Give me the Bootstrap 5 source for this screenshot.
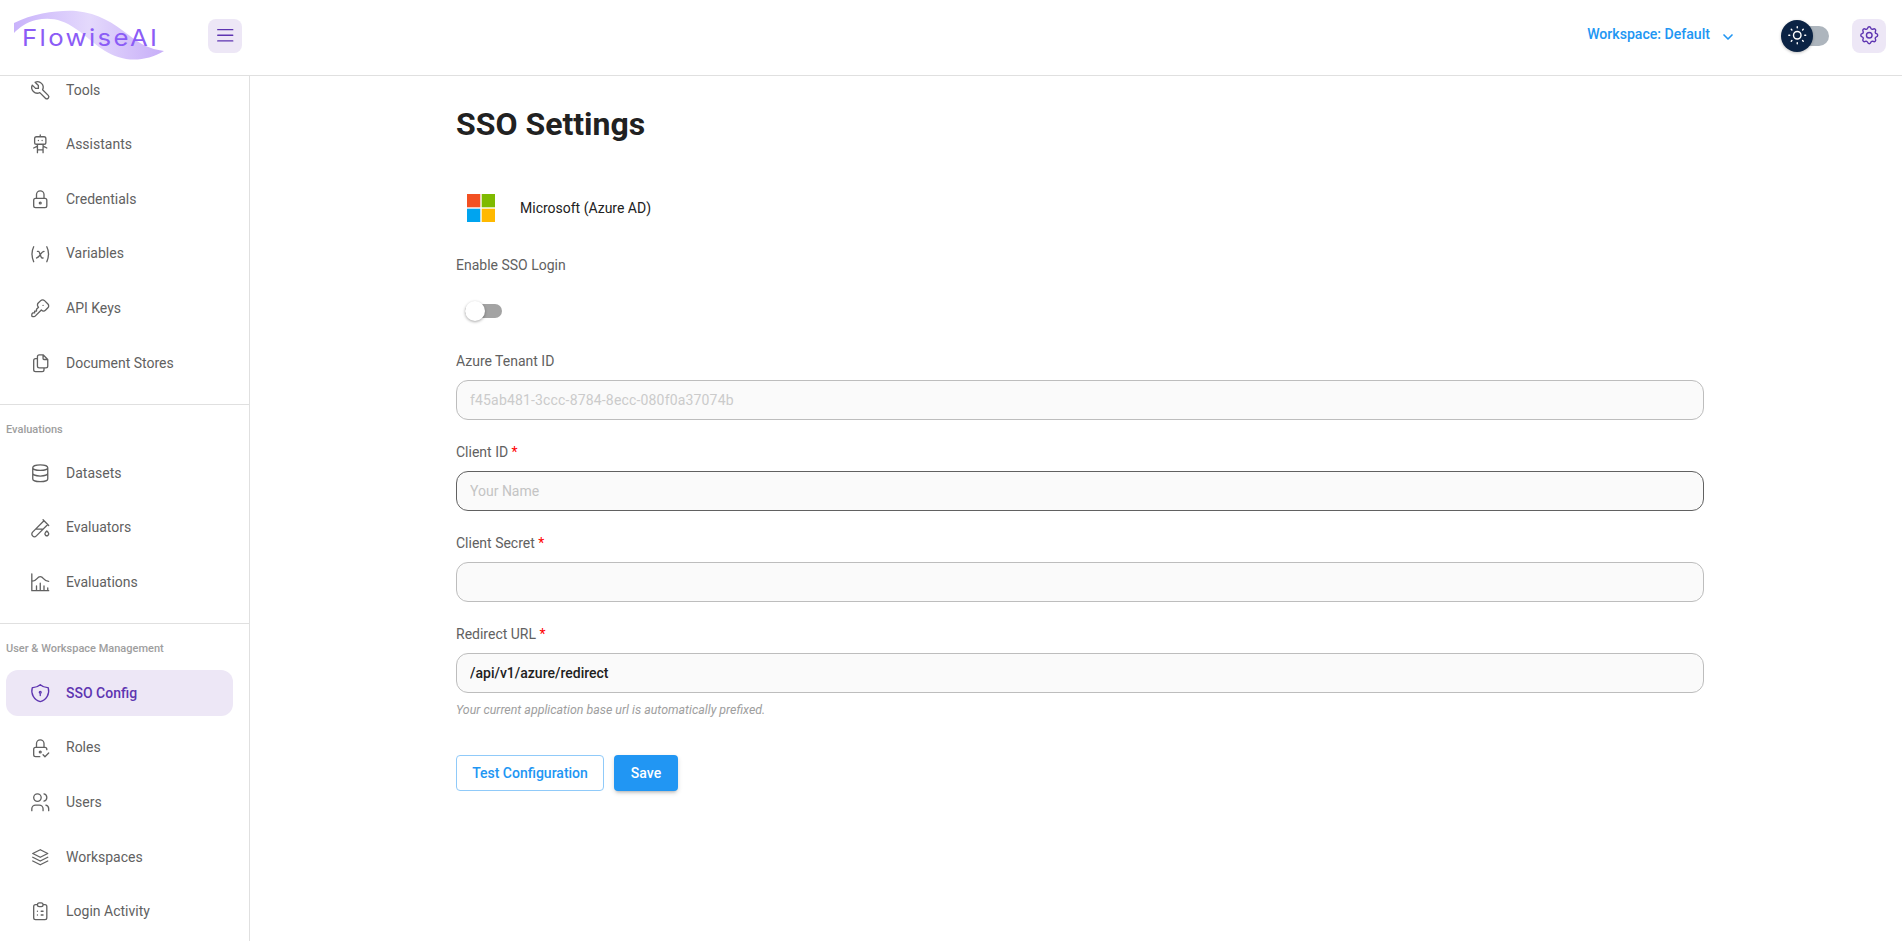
<!DOCTYPE html>
<html lang="en">
<head>
  <meta charset="UTF-8">
  <meta name="viewport" content="width=device-width, initial-scale=1.0">
  <title>SSO Settings | FlowiseAI</title>
  <link href="https://cdn.jsdelivr.net/npm/bootstrap@5.3.3/dist/css/bootstrap.min.css" rel="stylesheet">
  <style>
    html, body { height: 100%; overflow: hidden; }
    body { font-family: Roboto, sans-serif; font-size: 14px; color: #616161; background: #fff; }

    .top-bar { height: 76px; border-bottom: 1px solid #e0e0e0; padding: 0 16px 4px 14px; flex: none; }
    .logo-box { width: 194px; height: 75px; margin-top: 4px; }
    .soft-btn { width: 34px; height: 34px; border-radius: 8px; border: 0; padding: 0; background: #ede7f6; color: #5e35b1; }
    .soft-btn svg { width: 22.5px; height: 22.5px; }
    .ws-btn { color: #2196f3; font-weight: 500; font-size: 14.1px; margin-right: 47px; margin-top: -1.5px; }
    .ws-btn svg { width: 16px; height: 16px; margin-left: 10px; margin-top: 4px; }
    .theme-switch { position: relative; width: 46px; height: 20px; margin-right: 23px; border-radius: 10px; background: #adb5bd; }
    .theme-knob { position: absolute; left: -2px; top: -6px; width: 32px; height: 32px; border-radius: 50%; background: #0b2344; color: #fff; box-shadow: 0 1px 3px rgba(0,0,0,.25); }
    .theme-knob svg { width: 22.5px; height: 22.5px; }

    .side-panel { width: 250px; flex: none; border-right: 1px solid #e0e0e0; overflow: hidden; padding: 0 16px 0 6px; }
    .side-group { display: flex; flex-direction: column; gap: 8.67px; }
    .side-group.first { margin-top: -9px; }
    .side-link { height: 46px; border-radius: 12px; padding-left: 23px; color: #616161; text-decoration: none; }
    .side-link svg { width: 22.5px; height: 22.5px; margin-right: 14.5px; flex: none; stroke-width: 1.4; }
    .side-link.active { background: #ede7f6; color: #5e35b1; font-weight: 500; }
    .side-rule { height: 1px; background: #e0e0e0; margin: 17.5px -16px 17.5px -6px; }
    .side-group.first + .side-rule { margin-top: 18px; }
    .side-title { font-size: 11px; font-weight: 500; line-height: 14px; color: #9e9e9e; margin-bottom: 14.5px; }
    .side-title.tight { margin-bottom: 13.5px; }

    .form-area { width: 1248px; margin-left: 206px; }
    .page-title { font-size: 32px; font-weight: 700; line-height: 38px; color: #212121; margin: 29px 0 0; }
    .provider { height: 28px; margin: 51px 0 0 11px; color: #212121; }
    .provider svg { width: 28px; height: 28px; margin-right: 25px; }
    .field-label { display: block; line-height: 17px; margin-bottom: 10px; color: #616161; }
    .field-label b { color: #f00; font-weight: 400; }
    .field-block { margin-top: 24px; }
    .field-block.sso-toggle-block { margin-top: 34.5px; }
    .field-block.after-toggle { margin-top: 35.5px; }
    .sso-input { height: 40px; border: 1px solid #bdbdbd; border-radius: 12px; background: #fafafa; padding: 0 13px; font-size: 14px; font-weight: 500; color: #212121; box-shadow: none !important; }
    .sso-input:focus, .sso-input.is-focused { border-color: #616161; background: #fafafa; }
    .sso-input::placeholder { color: #c4c4c4; font-weight: 400; }
    #tenant::placeholder { letter-spacing: .17px; color: #cbcbcb; }
    .sso-switch { position: relative; display: block; width: 37px; height: 14px; border-radius: 7px; background: #a3a3a3; margin: 30px 0 0 9px; }
    .sso-switch::before { content: ""; position: absolute; left: 0; top: -3px; width: 20px; height: 20px; border-radius: 50%; background: #fff; box-shadow: 0 1px 3px rgba(0,0,0,.35); }
    .help-line { font-size: 12.4px; font-style: italic; color: #9e9e9e; margin-top: 9.5px; line-height: 14px; }
    .btn-row { margin-top: 38.5px; gap: 10px; }
    .btn-row .btn { height: 36px; font-size: 14px; font-weight: 500; border-radius: 4px; padding: 0 15px; }
    .btn-test { color: #2196f3; border: 1px solid #90caf9; background: #fff; width: 148px; }
    .btn-save { color: #fff; background: #2196f3; border: 0; width: 64px; box-shadow: 0 3px 3px -2px rgba(0,0,0,.2), 0 2px 5px rgba(0,0,0,.14); }
  </style>
</head>
<body class="d-flex flex-column">
  <header class="top-bar d-flex align-items-center">
    <div class="logo-box d-flex align-items-center">
      <svg width="160" height="75" viewBox="0 0 160 75">
        <defs>
          <linearGradient id="wave" x1="0" y1="0" x2="1" y2="0">
            <stop offset="0" stop-color="#c9b3fb"/>
            <stop offset=".5" stop-color="#e4d9fc"/>
            <stop offset="1" stop-color="#c7aef8"/>
          </linearGradient>
        </defs>
        <path d="M0 23C20 13 45 10 62 11C85 13 100 24 112 33C126 44 135 49 150 51C138 58 125 61 112 59C90 55 78 40 62 29C48 19 36 17 22 20C12 22 5 28 0 33Z" fill="url(#wave)"/>
        <text transform="translate(8 46) scale(1.12 1)" textLength="120.5" lengthAdjust="spacing" font-family="Inter, sans-serif" font-size="23" fill="#8b5cf6">FlowiseAI</text>
      </svg>
    </div>
    <button class="soft-btn d-flex align-items-center justify-content-center" type="button" aria-label="Menu">
      <svg viewBox="0 0 24 24" fill="none" stroke="currentColor" stroke-width="1.5" stroke-linecap="round"><path d="M4 6h16M4 12h16M4 18h16"/></svg>
    </button>
    <div class="ws-btn ms-auto d-flex align-items-center">Workspace: Default
      <svg viewBox="0 0 24 24" fill="none" stroke="currentColor" stroke-width="2.5" stroke-linecap="round" stroke-linejoin="round"><path d="M6 9l6 6l6 -6"/></svg>
    </div>
    <div class="theme-switch">
      <span class="theme-knob d-flex align-items-center justify-content-center">
        <svg viewBox="0 0 24 24" fill="none" stroke="currentColor" stroke-width="1.5" stroke-linecap="round" stroke-linejoin="round"><path d="M8 12a4 4 0 1 0 8 0a4 4 0 1 0 -8 0M3 12h1m8 -9v1m8 8h1m-9 8v1m-6.4 -15.4l.7 .7m12.1 -.7l-.7 .7m0 11.4l.7 .7m-12.1 -.7l-.7 .7"/></svg>
      </span>
    </div>
    <button class="soft-btn d-flex align-items-center justify-content-center" type="button" aria-label="Settings">
      <svg viewBox="0 0 24 24" fill="none" stroke="currentColor" stroke-width="1.5" stroke-linecap="round" stroke-linejoin="round"><path d="M10.325 4.317c.426 -1.756 2.924 -1.756 3.35 0a1.724 1.724 0 0 0 2.573 1.066c1.543 -.94 3.31 .826 2.37 2.37a1.724 1.724 0 0 0 1.065 2.572c1.756 .426 1.756 2.924 0 3.35a1.724 1.724 0 0 0 -1.066 2.573c.94 1.543 -.826 3.31 -2.37 2.37a1.724 1.724 0 0 0 -2.572 1.065c-.426 1.756 -2.924 1.756 -3.35 0a1.724 1.724 0 0 0 -2.573 -1.066c-1.543 .94 -3.31 -.826 -2.37 -2.37a1.724 1.724 0 0 0 -1.065 -2.572c-1.756 -.426 -1.756 -2.924 0 -3.35a1.724 1.724 0 0 0 1.066 -2.573c-.94 -1.543 .826 -3.31 2.37 -2.37c1 .608 2.296 .07 2.572 -1.065z"/><path d="M9 12a3 3 0 1 0 6 0a3 3 0 0 0 -6 0"/></svg>
    </button>
  </header>

  <div class="d-flex flex-grow-1 overflow-hidden">
    <nav class="side-panel">
      <div class="side-group first">
        <a class="side-link d-flex align-items-center" href="#"><svg viewBox="0 0 24 24" fill="none" stroke="currentColor" stroke-linecap="round" stroke-linejoin="round"><path d="M7 10h3v-3l-3.5 -3.5a6 6 0 0 1 8 8l6 6a2 2 0 0 1 -3 3l-6 -6a6 6 0 0 1 -8 -8l3.5 3.5"/></svg>Tools</a>
        <a class="side-link d-flex align-items-center" href="#"><svg viewBox="0 0 24 24" fill="none" stroke="currentColor" stroke-linecap="round" stroke-linejoin="round"><path d="M6 6a2 2 0 0 1 2 -2h8a2 2 0 0 1 2 2v4a2 2 0 0 1 -2 2h-8a2 2 0 0 1 -2 -2zM12 2v2M9 12v9M15 12v9M5 16l4 -2M15 14l4 2M9 18h6M10 8v.01M14 8v.01"/></svg>Assistants</a>
        <a class="side-link d-flex align-items-center" href="#"><svg viewBox="0 0 24 24" fill="none" stroke="currentColor" stroke-linecap="round" stroke-linejoin="round"><path d="M5 13a2 2 0 0 1 2 -2h10a2 2 0 0 1 2 2v6a2 2 0 0 1 -2 2h-10a2 2 0 0 1 -2 -2v-6zM11 16a1 1 0 1 0 2 0a1 1 0 0 0 -2 0M8 11v-4a4 4 0 1 1 8 0v4"/></svg>Credentials</a>
        <a class="side-link d-flex align-items-center" href="#"><svg viewBox="0 0 24 24" fill="none" stroke="currentColor" stroke-linecap="round" stroke-linejoin="round"><path d="M5 4c-2.5 5 -2.5 10 0 16m14 -16c2.5 5 2.5 10 0 16m-10 -11h1c1 0 1 1 2.016 3.527c.984 2.473 .984 3.473 1.984 3.473h1M8 16c1.5 0 3 -2 4 -3.5s2.5 -3.5 4 -3.5"/></svg>Variables</a>
        <a class="side-link d-flex align-items-center" href="#"><svg viewBox="0 0 24 24" fill="none" stroke="currentColor" stroke-linecap="round" stroke-linejoin="round"><path d="M16.555 3.843l3.602 3.602a2.877 2.877 0 0 1 0 4.069l-2.643 2.643a2.877 2.877 0 0 1 -4.069 0l-.301 -.301l-6.558 6.558a2 2 0 0 1 -1.239 .578l-.175 .008h-1.172a1 1 0 0 1 -.993 -.883l-.007 -.117v-1.172a2 2 0 0 1 .467 -1.284l.119 -.13l.414 -.414h2v-2h2v-2l2.144 -2.144l-.301 -.301a2.877 2.877 0 0 1 0 -4.069l2.643 -2.643a2.877 2.877 0 0 1 4.069 0zM15 9h.01"/></svg>API Keys</a>
        <a class="side-link d-flex align-items-center" href="#"><svg viewBox="0 0 24 24" fill="none" stroke="currentColor" stroke-linecap="round" stroke-linejoin="round"><path d="M15 3v4a1 1 0 0 0 1 1h4M18 17h-7a2 2 0 0 1 -2 -2v-10a2 2 0 0 1 2 -2h4l5 5v7a2 2 0 0 1 -2 2zM16 17v2a2 2 0 0 1 -2 2h-7a2 2 0 0 1 -2 -2v-10a2 2 0 0 1 2 -2h2"/></svg>Document Stores</a>
      </div>
      <div class="side-rule"></div>
      <div class="side-title tight">Evaluations</div>
      <div class="side-group">
        <a class="side-link d-flex align-items-center" href="#"><svg viewBox="0 0 24 24" fill="none" stroke="currentColor" stroke-linecap="round" stroke-linejoin="round"><path d="M4 6a8 3 0 1 0 16 0a8 3 0 1 0 -16 0M4 6v6a8 3 0 0 0 16 0v-6M4 12v6a8 3 0 0 0 16 0v-6"/></svg>Datasets</a>
        <a class="side-link d-flex align-items-center" href="#"><svg viewBox="0 0 24 24" fill="none" stroke="currentColor" stroke-linecap="round" stroke-linejoin="round"><path d="M20 8.04l-12.122 12.124a2.857 2.857 0 1 1 -4.041 -4.04l12.122 -12.124M7 13h8M19 15l1.5 1.6a2 2 0 1 1 -3 0l1.5 -1.6zM15 3l6 6"/></svg>Evaluators</a>
        <a class="side-link d-flex align-items-center" href="#"><svg viewBox="0 0 24 24" fill="none" stroke="currentColor" stroke-linecap="round" stroke-linejoin="round"><path d="M3 3v18h18M20 18v3M16 16v5M12 13v8M8 16v5M3 11c6 0 5 -5 9 -5s3 5 9 5"/></svg>Evaluations</a>
      </div>
      <div class="side-rule"></div>
      <div class="side-title">User &amp; Workspace Management</div>
      <div class="side-group">
        <a class="side-link active d-flex align-items-center" href="#"><svg viewBox="0 0 24 24" fill="none" stroke="currentColor" stroke-linecap="round" stroke-linejoin="round"><path d="M12 3a12 12 0 0 0 8.5 3a12 12 0 0 1 -8.5 15a12 12 0 0 1 -8.5 -15a12 12 0 0 0 8.5 -3M11 11a1 1 0 1 0 2 0a1 1 0 1 0 -2 0M12 12v2.5"/></svg>SSO Config</a>
        <a class="side-link d-flex align-items-center" href="#"><svg viewBox="0 0 24 24" fill="none" stroke="currentColor" stroke-linecap="round" stroke-linejoin="round"><path d="M11.5 21h-4.5a2 2 0 0 1 -2 -2v-6a2 2 0 0 1 2 -2h10a2 2 0 0 1 2 2v.5M11 16a1 1 0 1 0 2 0a1 1 0 0 0 -2 0M8 11v-4a4 4 0 1 1 8 0v4M15 19l2 2l4 -4"/></svg>Roles</a>
        <a class="side-link d-flex align-items-center" href="#"><svg viewBox="0 0 24 24" fill="none" stroke="currentColor" stroke-linecap="round" stroke-linejoin="round"><path d="M5 7a4 4 0 1 0 8 0a4 4 0 0 0 -8 0M3 21v-2a4 4 0 0 1 4 -4h4a4 4 0 0 1 4 4v2M16 3.13a4 4 0 0 1 0 7.75M21 21v-2a4 4 0 0 0 -3 -3.85"/></svg>Users</a>
        <a class="side-link d-flex align-items-center" href="#"><svg viewBox="0 0 24 24" fill="none" stroke="currentColor" stroke-linecap="round" stroke-linejoin="round"><path d="M12 4l-8 4l8 4l8 -4l-8 -4M4 12l8 4l8 -4M4 16l8 4l8 -4"/></svg>Workspaces</a>
        <a class="side-link d-flex align-items-center" href="#"><svg viewBox="0 0 24 24" fill="none" stroke="currentColor" stroke-linecap="round" stroke-linejoin="round"><path d="M9 5h-2a2 2 0 0 0 -2 2v12a2 2 0 0 0 2 2h10a2 2 0 0 0 2 -2v-12a2 2 0 0 0 -2 -2h-2M9 5a2 2 0 0 1 2 -2h2a2 2 0 0 1 2 2a2 2 0 0 1 -2 2h-2a2 2 0 0 1 -2 -2M9 12h.01M13 12h2M9 16h.01M13 16h2"/></svg>Login Activity</a>
      </div>
    </nav>

    <main class="form-area">
      <h1 class="page-title">SSO Settings</h1>
      <div class="provider d-flex align-items-center">
        <svg viewBox="0 0 28 28"><rect width="13.3" height="13.3" fill="#f25022"/><rect x="14.7" width="13.3" height="13.3" fill="#7fba00"/><rect y="14.7" width="13.3" height="13.3" fill="#00a4ef"/><rect x="14.7" y="14.7" width="13.3" height="13.3" fill="#ffb900"/></svg>
        Microsoft (Azure AD)
      </div>
      <form>
        <div class="field-block sso-toggle-block">
          <span class="field-label mb-0">Enable SSO Login</span>
          <span class="sso-switch"></span>
        </div>
        <div class="field-block after-toggle">
          <label class="field-label" for="tenant">Azure Tenant ID</label>
          <input id="tenant" class="form-control sso-input" placeholder="f45ab481-3ccc-8784-8ecc-080f0a37074b">
        </div>
        <div class="field-block">
          <label class="field-label" for="client">Client ID <b>*</b></label>
          <input id="client" class="form-control sso-input is-focused" placeholder="Your Name">
        </div>
        <div class="field-block">
          <label class="field-label" for="secret">Client Secret <b>*</b></label>
          <input id="secret" class="form-control sso-input">
        </div>
        <div class="field-block">
          <label class="field-label" for="redirect">Redirect URL <b>*</b></label>
          <input id="redirect" class="form-control sso-input" value="/api/v1/azure/redirect">
        </div>
        <div class="help-line">Your current application base url is automatically prefixed.</div>
        <div class="btn-row d-flex">
          <button type="button" class="btn btn-test">Test Configuration</button>
          <button type="button" class="btn btn-save">Save</button>
        </div>
      </form>
    </main>
  </div>
  <script src="https://cdn.jsdelivr.net/npm/bootstrap@5.3.3/dist/js/bootstrap.bundle.min.js"></script>
</body>
</html>
